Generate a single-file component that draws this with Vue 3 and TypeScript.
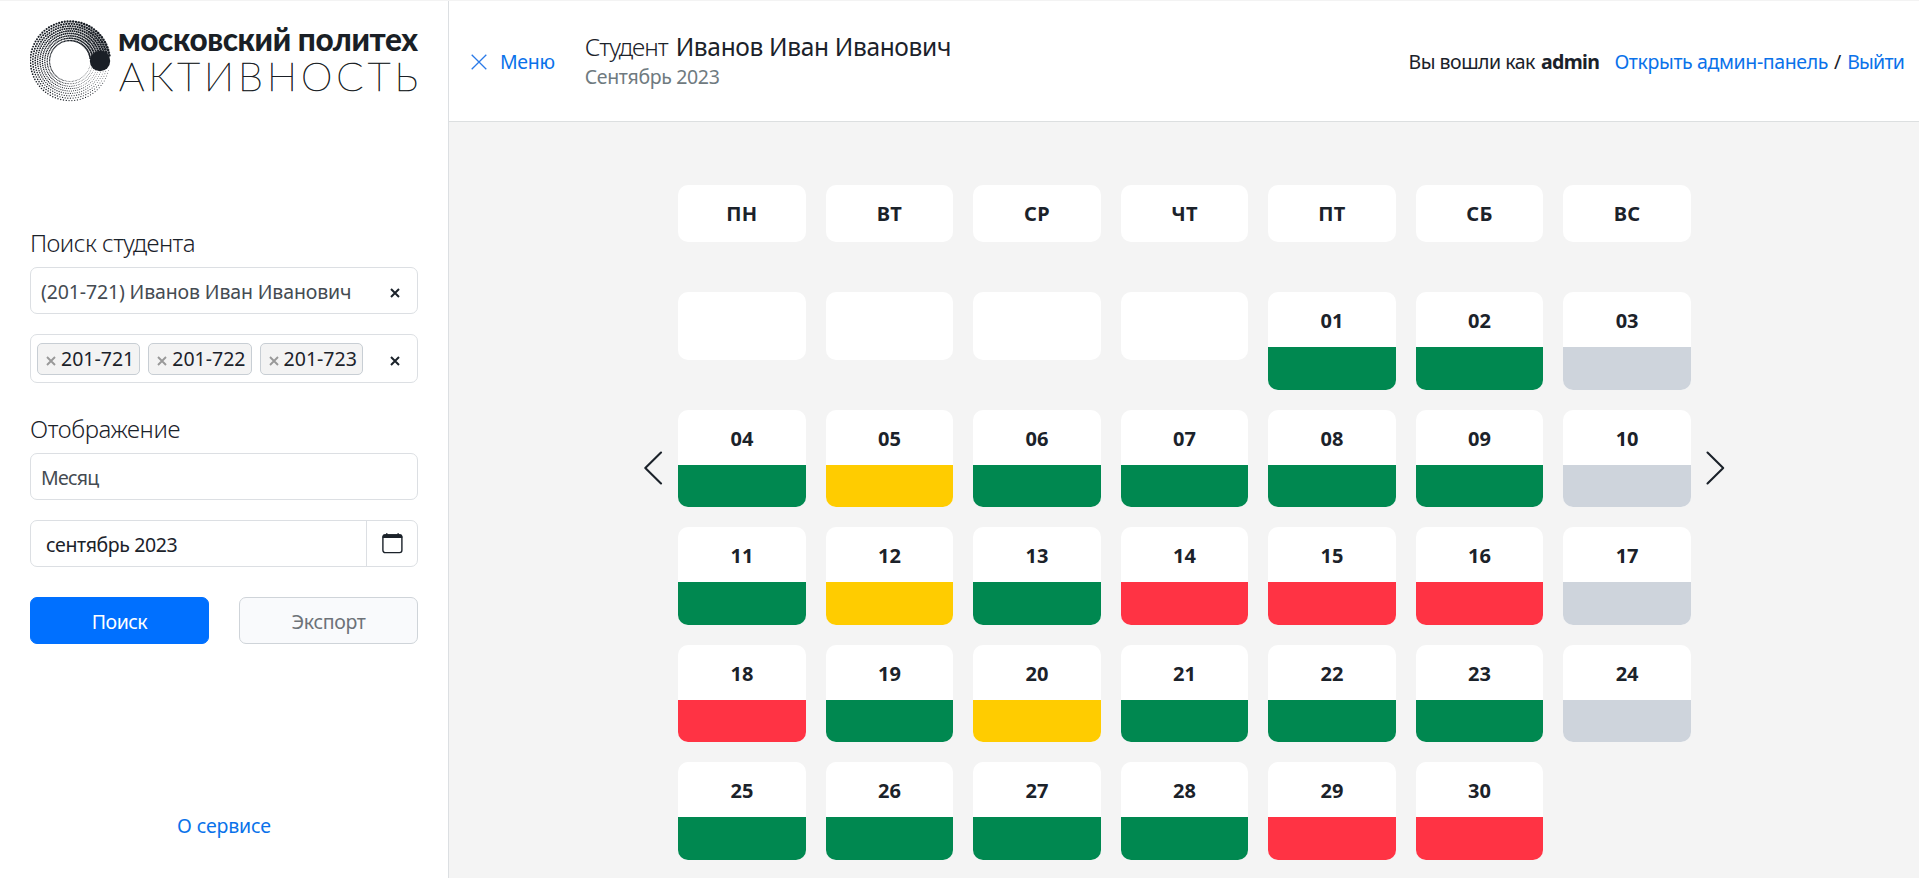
<script setup lang="ts">
type Status = 'ok' | 'part' | 'miss' | 'off'
interface Day { label: string; status: Status | null }

const weekdays = ['ПН', 'ВТ', 'СР', 'ЧТ', 'ПТ', 'СБ', 'ВС']
const groups = ['201-721', '201-722', '201-723']

const partial = [5, 12, 20]
const missed = [14, 15, 16, 18, 29, 30]
const off = [3, 10, 17, 24]

function statusOf(n: number): Status {
  if (partial.includes(n)) return 'part'
  if (missed.includes(n)) return 'miss'
  if (off.includes(n)) return 'off'
  return 'ok'
}

const blanks: Day[] = Array.from({ length: 4 }, () => ({ label: '', status: null }))
const days: Day[] = [
  ...blanks,
  ...Array.from({ length: 30 }, (_, i) => ({
    label: String(i + 1).padStart(2, '0'),
    status: statusOf(i + 1)
  }))
]

// Halftone ring: dots grow clockwise, from the lower right round to the solid end.
const dots: { x: number; y: number; r: number }[] = []
const SPOKES = 84
for (let ring = 0; ring < 9; ring++) {
  const radius = 20.4 + ring * 2.4
  for (let s = 0; s < SPOKES; s++) {
    const t = (s + (ring % 2) * 0.5) / SPOKES
    const a = (t * 342 + 14) * Math.PI / 180
    dots.push({
      x: +(40 + radius * Math.cos(a)).toFixed(2),
      y: +(41 + radius * Math.sin(a)).toFixed(2),
      r: +((0.42 + 0.92 * t) * (0.74 + ring * 0.04)).toFixed(2)
    })
  }
}
</script>

<template>
  <div class="app">
    <aside class="sidebar">
      <svg class="logo" width="390" height="84" viewBox="0 0 390 84">
        <g fill="#1a1f26">
          <circle v-for="(d, i) in dots" :key="i" :cx="d.x" :cy="d.y" :r="d.r" />
          <circle cx="70" cy="41" r="10.2" />
        </g>
        <text class="logo-top" x="88" y="30.5" textLength="300">московский политех</text>
        <text class="logo-bottom" x="89" y="71" textLength="299">АКТИВНОСТЬ</text>
      </svg>

      <h2 class="label search-label">Поиск студента</h2>
      <div class="field">
        <span class="student">(201-721) Иванов Иван Иванович</span>
        <svg class="clear" width="10" height="10" viewBox="0 0 10 10"><path d="M1 1l8 8M9 1l-8 8" /></svg>
      </div>
      <div class="field tags">
        <span v-for="g in groups" :key="g" class="tag">
          <svg width="10" height="10" viewBox="0 0 10 10"><path d="M1 1l8 8M9 1l-8 8" /></svg><span>{{ g }}</span>
        </span>
        <svg class="clear" width="10" height="10" viewBox="0 0 10 10"><path d="M1 1l8 8M9 1l-8 8" /></svg>
      </div>

      <h2 class="label view-label">Отображение</h2>
      <div class="field"><span class="mode">Месяц</span></div>
      <div class="field date">
        <span class="month">сентябрь 2023</span>
        <span class="picker">
          <svg width="21" height="21" viewBox="0 0 21 21">
            <rect x="0.9" y="2" width="19" height="17.6" rx="2.3" fill="none" stroke="#1b222a" stroke-width="1.4" />
            <path d="M0.6 5V3.6a2.3 2.3 0 0 1 2.3-2.3H4V0.3h1.5v1h9.9v-1h1.5v1h1.1a2.3 2.3 0 0 1 2.3 2.3V5z" fill="#1b222a" />
          </svg>
        </span>
      </div>
      <div class="actions">
        <button class="btn primary">Поиск</button>
        <button class="btn secondary">Экспорт</button>
      </div>
      <a class="about">О сервисе</a>
    </aside>

    <div class="content">
      <header class="header">
        <a class="menu">
          <svg width="16" height="16" viewBox="0 0 16 16"><path d="M0.7 0.7l14.6 14.6M15.3 0.7L0.7 15.3" /></svg>
          <span>Меню</span>
        </a>
        <div class="title">
          <div class="who"><span class="role">Студент</span><span class="name">Иванов Иван Иванович</span></div>
          <div class="period">Сентябрь 2023</div>
        </div>
        <div class="account">
          <span class="logged">Вы вошли как</span><b>admin</b>
          <a class="panel">Открыть админ-панель</a><span class="slash">/</span><a class="exit">Выйти</a>
        </div>
      </header>

      <main class="main">
        <svg class="arrow" width="19" height="34" viewBox="0 0 19 34"><path d="M17 1.5L1.3 17l15.7 15.5" /></svg>
        <div class="calendar">
          <div class="grid weekdays">
            <div v-for="w in weekdays" :key="w" class="weekday">{{ w }}</div>
          </div>
          <div class="grid days">
            <div v-for="(d, i) in days" :key="i" class="day" :class="{ blank: !d.status }">
              <div class="num">{{ d.label }}</div>
              <div v-if="d.status" class="status" :class="d.status"></div>
            </div>
          </div>
        </div>
        <svg class="arrow" width="19" height="34" viewBox="0 0 19 34"><path d="M1.5 1.5L17.2 17L1.5 32.5" /></svg>
      </main>
    </div>
  </div>
</template>

<style>
body { margin: 0; overflow: hidden; }
</style>

<style scoped>
* { box-sizing: border-box; }
.app {
  display: flex;
  height: 878px;
  border-top: 1px solid #f3f3f3;
  background: #fff;
  color: #1b222a;
  font: 400 19.5px/24px "Noto Sans", "Open Sans", sans-serif;
  white-space: nowrap;
}
a { color: #0a72ea; }

.sidebar {
  display: flex;
  flex-direction: column;
  flex: none;
  width: 449px;
  padding: 19px 30px 33px;
  border-right: 1px solid #dcdfe2;
}
.logo { display: block; flex: none; }
.logo text { fill: #1a1f26; font-family: Lato, sans-serif; }
.logo .logo-top { font-size: 31.5px; font-weight: 900; }
.logo .logo-bottom { font-size: 40px; font-weight: 100; stroke: #1a1f26; stroke-width: 0.7; }
.label { margin: 0; font-size: 24px; font-weight: 300; line-height: 30px; }
.search-label { margin-top: 124px; letter-spacing: -0.55px; }
.view-label { margin-top: 31px; letter-spacing: -0.37px; }
.field {
  display: flex;
  align-items: center;
  flex: none;
  height: 47px;
  margin-top: 9px;
  padding: 0 17px 0 10px;
  border: 1px solid #dcdfe3;
  border-radius: 7px;
}
.student, .mode, .month { padding-top: 2px; }
.student { color: #454b52; letter-spacing: -0.14px; }
.mode { color: #454b52; letter-spacing: -0.7px; }
.clear { margin: 4px 0 0 auto; }
.clear path { fill: none; stroke: #1b222a; stroke-width: 2; }
.tags { height: 49px; margin-top: 20px; padding-left: 6px; gap: 8px; }
.tag {
  display: flex;
  align-items: center;
  gap: 5px;
  width: 103.3px;
  height: 32px;
  padding: 1px 0 0 8px;
  border: 1px solid #c8ced4;
  border-radius: 5px;
  background: #f3f3f3;
}
.tag svg { flex: none; margin-top: 3px; }
.tag path { fill: none; stroke: #999; stroke-width: 1.9; }
.date { margin-top: 20px; padding: 0 0 0 15px; }
.month { letter-spacing: -0.38px; }
.picker {
  display: flex;
  align-items: center;
  justify-content: center;
  width: 51px;
  height: 100%;
  margin-left: auto;
  border-left: 1px solid #dcdfe3;
}
.actions { display: flex; justify-content: space-between; margin-top: 30px; }
.btn {
  width: 179px;
  height: 47px;
  padding: 2px 0 0;
  border: 1px solid #cfd4d9;
  border-radius: 7px;
  font: inherit;
}
.primary { border-color: #0070ff; background: #0070ff; color: #fff; letter-spacing: -0.5px; }
.secondary { background: #f9fafc; color: #6d7278; letter-spacing: -0.33px; }
.about { margin: auto auto 7px; letter-spacing: -0.15px; }

.content { display: flex; flex-direction: column; flex: 1; min-width: 0; }
.header {
  display: flex;
  align-items: center;
  height: 121px;
  padding: 0 15px 0 22px;
  border-bottom: 1px solid #dcdfe0;
}
.menu { display: flex; align-items: center; gap: 13px; padding-top: 2px; letter-spacing: -0.33px; }
.menu path { fill: none; stroke: #2a7ae8; stroke-width: 1.3; }
.title { margin-left: 30px; padding-bottom: 2px; }
.who { display: flex; gap: 8px; font-size: 24.5px; line-height: 32px; }
.role { font-weight: 300; letter-spacing: -1px; }
.name { letter-spacing: -0.34px; }
.period { color: #6f7a80; line-height: 27px; letter-spacing: -0.35px; }
.account { display: flex; margin-left: auto; padding-top: 2px; }
.logged { letter-spacing: -0.5px; }
.account b { margin-left: 6px; letter-spacing: -0.6px; }
.panel { margin-left: 15px; letter-spacing: -0.38px; }
.slash { margin: 0 6px; }
.exit { letter-spacing: -0.8px; }

.main {
  display: flex;
  flex: 1;
  gap: 15px;
  padding: 63px 0 0 195px;
  background: #f4f4f4;
}
.arrow { flex: none; margin-top: 266px; }
.arrow path { fill: none; stroke: #1b222a; stroke-width: 2.1; stroke-linecap: round; stroke-linejoin: round; }
.calendar { width: 1013px; }
.grid { display: grid; grid-template-columns: repeat(7, 1fr); column-gap: 19.7px; font-size: 20px; font-weight: 700; text-align: center; }
.weekday { height: 57px; border-radius: 10px; background: #fff; line-height: 57px; letter-spacing: 0.3px; }
.days { margin-top: 50.3px; grid-auto-rows: 97.6px; row-gap: 19.9px; }
.day { overflow: hidden; border-radius: 10px; background: #fff; }
.blank { height: 68px; }
.num { height: 55px; line-height: 57px; }
.status { height: 43px; }
.ok { background: #008850; }
.part { background: #ffcc00; }
.miss { background: #ff3344; }
.off { background: #ced4dc; }
</style>
